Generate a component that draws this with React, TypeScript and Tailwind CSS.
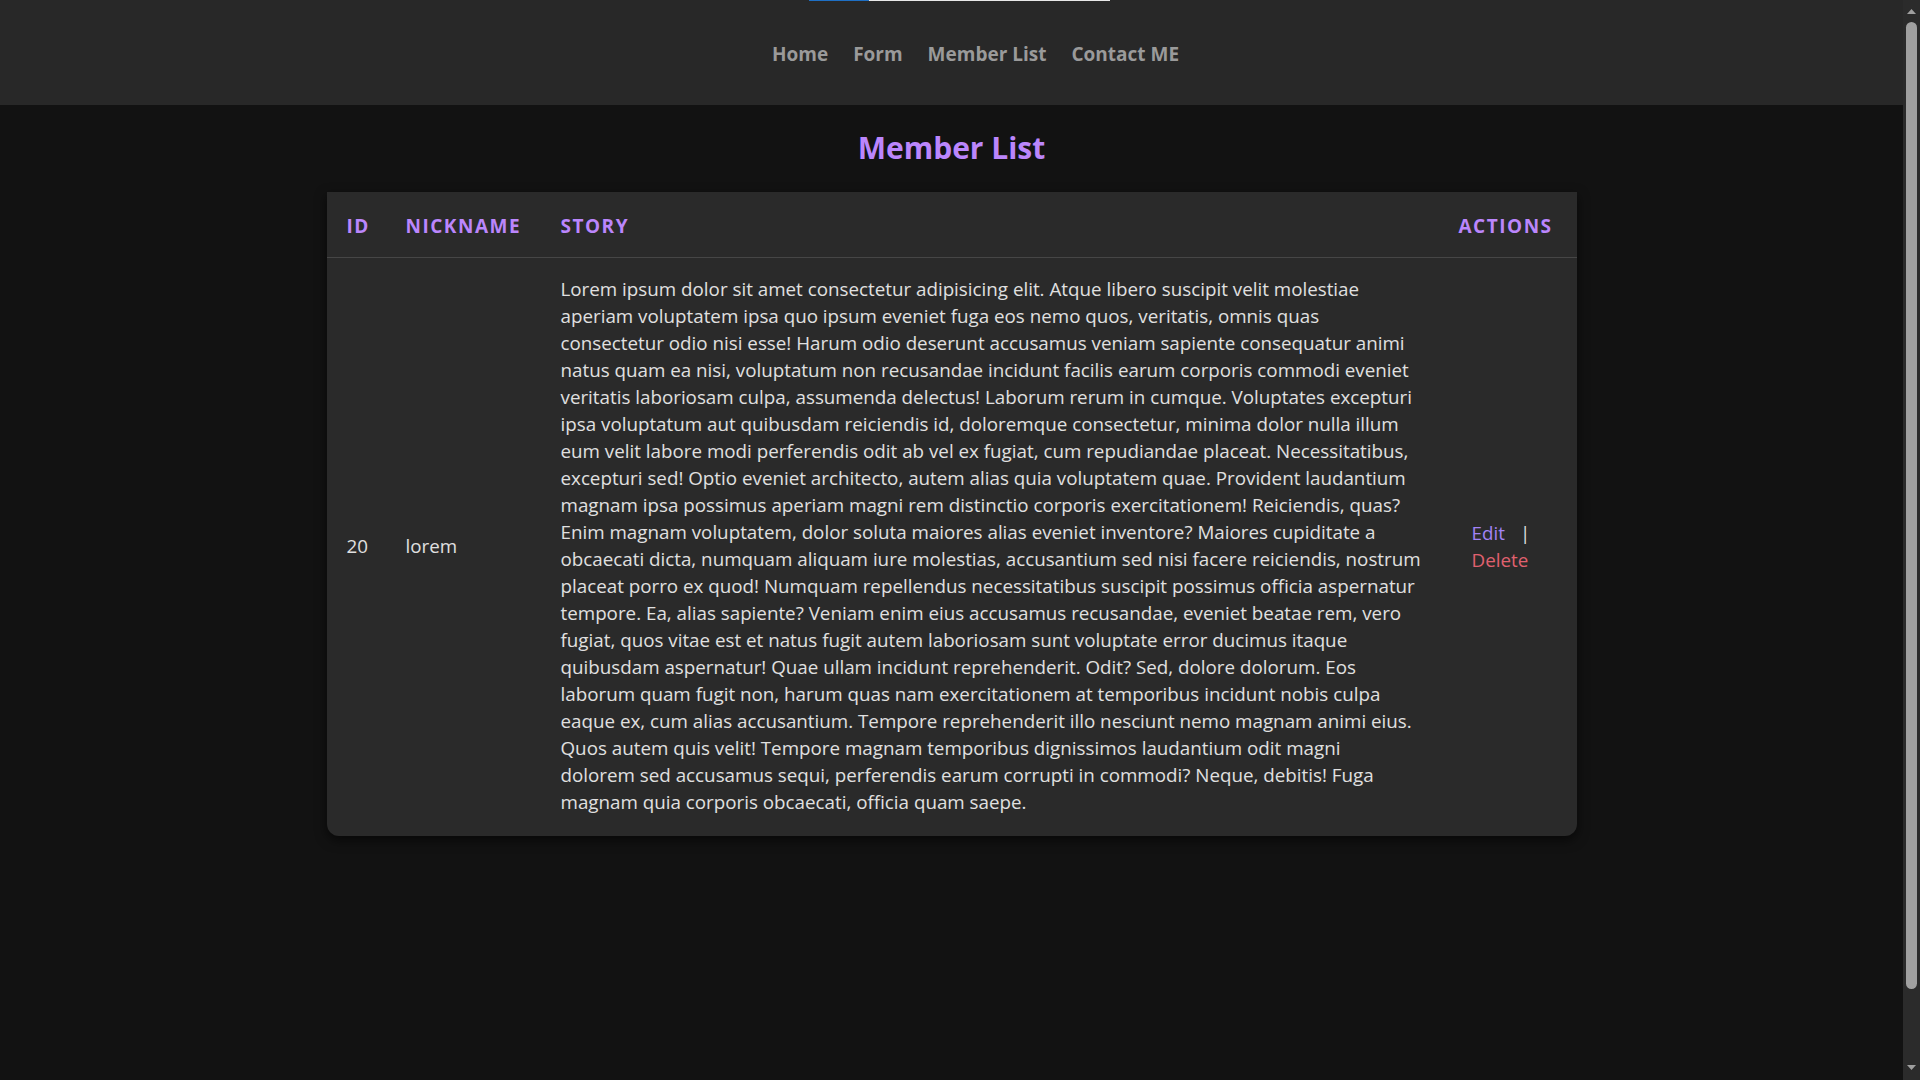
import React from "react";

interface Member {
  id: number;
  nickname: string;
  story: string;
}

const members: Member[] = [
  {
    id: 20,
    nickname: "lorem",
    story: [
      "Lorem ipsum dolor sit amet consectetur adipisicing elit. Atque libero suscipit velit molestiae",
      "aperiam voluptatem ipsa quo ipsum eveniet fuga eos nemo quos, veritatis, omnis quas",
      "consectetur odio nisi esse! Harum odio deserunt accusamus veniam sapiente consequatur animi",
      "natus quam ea nisi, voluptatum non recusandae incidunt facilis earum corporis commodi eveniet",
      "veritatis laboriosam culpa, assumenda delectus! Laborum rerum in cumque. Voluptates excepturi",
      "ipsa voluptatum aut quibusdam reiciendis id, doloremque consectetur, minima dolor nulla illum",
      "eum velit labore modi perferendis odit ab vel ex fugiat, cum repudiandae placeat. Necessitatibus,",
      "excepturi sed! Optio eveniet architecto, autem alias quia voluptatem quae. Provident laudantium",
      "magnam ipsa possimus aperiam magni rem distinctio corporis exercitationem! Reiciendis, quas?",
      "Enim magnam voluptatem, dolor soluta maiores alias eveniet inventore? Maiores cupiditate a",
      "obcaecati dicta, numquam aliquam iure molestias, accusantium sed nisi facere reiciendis, nostrum",
      "placeat porro ex quod! Numquam repellendus necessitatibus suscipit possimus officia aspernatur",
      "tempore. Ea, alias sapiente? Veniam enim eius accusamus recusandae, eveniet beatae rem, vero",
      "fugiat, quos vitae est et natus fugit autem laboriosam sunt voluptate error ducimus itaque",
      "quibusdam aspernatur! Quae ullam incidunt reprehenderit. Odit? Sed, dolore dolorum. Eos",
      "laborum quam fugit non, harum quas nam exercitationem at temporibus incidunt nobis culpa",
      "eaque ex, cum alias accusantium. Tempore reprehenderit illo nesciunt nemo magnam animi eius.",
      "Quos autem quis velit! Tempore magnam temporibus dignissimos laudantium odit magni",
      "dolorem sed accusamus sequi, perferendis earum corrupti in commodi? Neque, debitis! Fuga",
      "magnam quia corporis obcaecati, officia quam saepe.",
    ].join("\n"),
  },
];

const navLinks = ["Home", "Form", "Member List", "Contact ME"];

// dark window scrollbar on the right edge
function Scrollbar() {
  return (
    <div className="fixed top-0 right-0 flex h-screen w-[17px] flex-col items-center bg-[#2b2b2b]">
      <svg width="9" height="5" viewBox="0 0 9 5" className="mt-[9px] ml-[-1px]">
        <path d="M4.5 0L9 5H0z" fill="#9f9f9f" />
      </svg>
      <div className="mt-[8px] h-[967px] w-[11px] ml-[-1px] rounded-full bg-[#a0a0a0]" />
      <div className="flex-1" />
      <svg width="9" height="5" viewBox="0 0 9 5" className="mb-[10px] ml-[-1px]">
        <path d="M0 0H9L4.5 5z" fill="#9f9f9f" />
      </svg>
    </div>
  );
}

export default function App() {
  return (
    <div className="relative min-h-screen bg-[#121212] pr-[17px] font-['Segoe_UI','Open_Sans',sans-serif] text-[#e0e0e0]">
      {/* thin progress line peeking at the very top */}
      <div className="absolute top-0 left-[809px] flex h-px w-[301px]">
        <div className="w-[60px] bg-[#1e6fc4]" />
        <div className="flex-1 bg-[#e8e8e8]" />
      </div>

      <nav className="flex h-[105px] items-center justify-center bg-[#282828] pt-[3px]">
        <ul className="flex items-center gap-[25px] pl-12">
          {navLinks.map((link) => (
            <li key={link}>
              <a href="#" className="text-[19px] font-bold text-[#9a9a9a] hover:text-white">
                {link}
              </a>
            </li>
          ))}
        </ul>
      </nav>

      <main className="px-4">
        <h1 className="pt-[22px] pb-[23px] text-center text-[30px] leading-[42px] font-bold text-[#bb86fc]">
          Member List
        </h1>

        <div className="mx-auto w-[1250px] rounded-b-xl bg-[#2a2a2a] shadow-[0_4px_12px_rgba(0,0,0,0.6)]">
          <table className="w-full table-fixed border-collapse">
            <colgroup>
              <col className="w-[59px]" />
              <col className="w-[156px]" />
              <col />
              <col className="w-[136px]" />
            </colgroup>
            <thead>
              <tr className="h-[65px] border-b border-[#464646] text-left text-[19px] font-bold tracking-[1.5px] text-[#bb86fc] uppercase">
                <th className="pt-[3px] pl-5">ID</th>
                <th className="pt-[3px] pl-5">Nickname</th>
                <th className="pt-[3px] pl-[19px]">Story</th>
                <th className="pt-[3px] pl-[18px]">Actions</th>
              </tr>
            </thead>
            <tbody className="text-[18.8px] leading-[27px]">
              {members.map((m) => (
                <tr key={m.id}>
                  <td className="pl-5 align-middle">{m.id}</td>
                  <td className="pl-5 align-middle">{m.nickname}</td>
                  <td className="pt-[18px] pr-1 pb-[20px] pl-[19px] align-middle whitespace-pre-line">
                    {m.story}
                  </td>
                  <td className="pl-[31px] align-middle">
                    <div>
                      <button className="text-[#a283f5]">Edit</button>
                      <span className="ml-[15px] text-[#e0e0e0]">|</span>
                    </div>
                    <button className="text-[#e0616f]">Delete</button>
                  </td>
                </tr>
              ))}
            </tbody>
          </table>
        </div>
      </main>

      <Scrollbar />
    </div>
  );
}
